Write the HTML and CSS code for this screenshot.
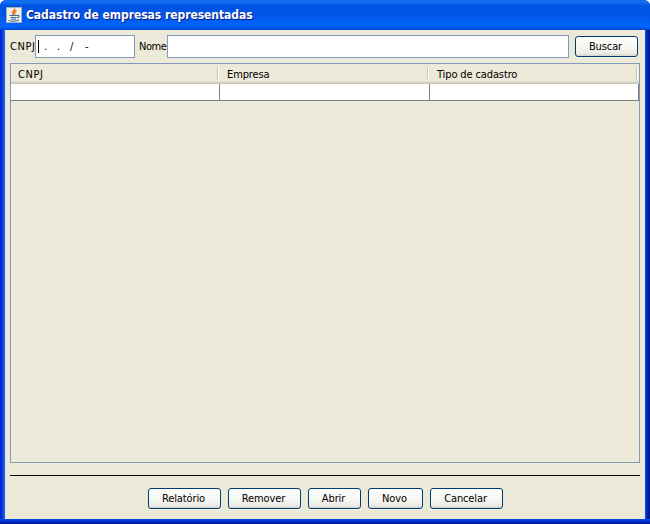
FILE: index.html
```html
<!DOCTYPE html>
<html lang="pt-BR">
<head>
<meta charset="utf-8">
<title>Cadastro de empresas representadas</title>
<link rel="stylesheet" href="styles.css">
</head>
<body>
<div class="window">
  <header class="titlebar">
    <svg class="java" width="16" height="16" viewBox="0 0 16 16">
      <rect width="16" height="16" fill="#a9adb4"/>
      <rect x="1" y="1" width="14" height="14" fill="#f0efeb"/>
      <path d="M8.500 1.500C9.500 4 5.500 4.500 6.500 6.500L7.500 8M10.500 3.500C8 5 8 5.500 9 7.500" fill="none" stroke="#e8761e" stroke-width="1.600"/>
      <path d="M3.500 8.500h7.500M4.500 10.500h6M11 8.500c3-.5 2.500 2 0 2.500M2.500 13.500c3 1 7 1 10.500-.5M5 12.300h5" fill="none" stroke="#426d93" stroke-width="1.100"/>
    </svg>
    <h1>Cadastro de empresas representadas</h1>
  </header>
  <main class="content">
    <div class="search">
      <label class="lbl-cnpj">CNPJ</label>
      <div class="field cnpj"><i class="caret"></i><span>.</span><span>.</span><span class="slash">/</span><span>-</span></div>
      <label class="lbl-nome">Nome</label>
      <div class="field nome"></div>
      <button class="buscar"><span>Buscar</span></button>
    </div>
    <section class="table">
      <div class="head"><div class="th-cnpj"><span>CNPJ</span></div><div class="th-empresa"><span>Empresa</span></div><div class="th-tipo"><span>Tipo de cadastro</span></div></div>
      <div class="row"><div></div><div></div><div></div></div>
    </section>
    <div class="rule"></div>
    <footer class="actions">
      <button class="relatorio"><span>Relatório</span></button>
      <button class="remover"><span>Remover</span></button>
      <button class="abrir"><span>Abrir</span></button>
      <button class="novo"><span>Novo</span></button>
      <button class="cancelar"><span>Cancelar</span></button>
    </footer>
  </main>
</div>
</body>
</html>
```
FILE: styles.css
```css
* { box-sizing: border-box; }
body { margin: 0; width: 650px; height: 524px; overflow: hidden; background: #fff; color: #000; font: 11px/13px "DejaVu Sans Condensed", "DejaVu Sans", sans-serif; letter-spacing: -0.12px; }
.window { height: 524px; display: flex; flex-direction: column; overflow: hidden; border-radius: 6px 6px 0 0; background: linear-gradient(90deg, #0019cf 0, #0831d9 2px, #166aee 4px, #0855dd 5px, #0855dd 645px, #003ddc 646px, #001ea0 648px, #00138c 650px); }
.titlebar { height: 30px; flex: none; display: flex; align-items: center; gap: 4px; padding: 0 0 0 6px; background: linear-gradient(#0058e6 0, #1a78f5 1px, #0869eb 3px, #0054e3 6px, #0054e3 14px, #005cf2 20px, #0066ff 26px, #005cf0 28px, #0044c8 30px); }
h1 { margin: 0; color: #fff; font: bold 12px/15px "DejaVu Sans Condensed", sans-serif; letter-spacing: -0.05px; text-shadow: 1px 1px #0a1883; white-space: nowrap; }
.content { margin: 0 5px; height: 489px; flex: none; background: #ece9d8; padding: 5px 5px 0; }
.window::after { content: ""; height: 5px; background: linear-gradient(#0050ee, #0831d9 2px, #001ea0 4px, #00138c); }
.search { display: flex; height: 23px; align-items: center; white-space: nowrap; }
.lbl-cnpj { width: 25px; }
.lbl-cnpj, .th-cnpj { letter-spacing: 0.6px; }
.lbl-nome { width: 28px; margin-left: 4px; letter-spacing: -0.45px; }
.field { height: 23px; background: #fff; border: 1px solid #7f9db9; }
.cnpj { width: 100px; display: flex; align-items: center; padding-left: 2px; }
.cnpj span { width: 13px; flex: none; }
.cnpj .slash { width: 15px; }
.caret { width: 1px; height: 13px; background: #000; margin-right: 5px; }
.nome { width: 402px; }
button { height: 21px; padding: 0; font: inherit; letter-spacing: inherit; color: #000; border: 1px solid #003c74; border-radius: 3px; background: linear-gradient(#fff, #f5f5f1 60%, #ebeae4 88%, #d6d0c5); box-shadow: 0 1px #f5f3ea; }
button span { margin-right: 2px; }
.buscar { width: 63px; margin-left: 6px; }
.table { height: 400px; margin-top: 5px; border: 1px solid #7f9db9; }
.head, .row { display: grid; grid-template-columns: 209px 210px 209px; }
.head { height: 20px; background: linear-gradient(transparent 17px, #e2dece 17px 18px, #d6d2c2 18px 19px, #cbc7b8 19px); }
.head div { height: 13px; margin-top: 3px; border-right: 1px solid #fff; box-shadow: inset -1px 0 #c7c5b2; padding-left: 7px; line-height: 15px; white-space: nowrap; margin-right: 1px; }
.row { height: 17px; background: #fff; border-bottom: 1px solid #808080; }
.row div { border-right: 1px solid #808080; }
.rule { height: 1px; background: #000; margin-top: 12px; }
.actions { display: flex; justify-content: center; gap: 7px; margin: 12px 0 0 1px; }
.relatorio, .remover, .cancelar { width: 73px; }
.abrir { width: 53px; }
.novo { width: 55px; }
```
